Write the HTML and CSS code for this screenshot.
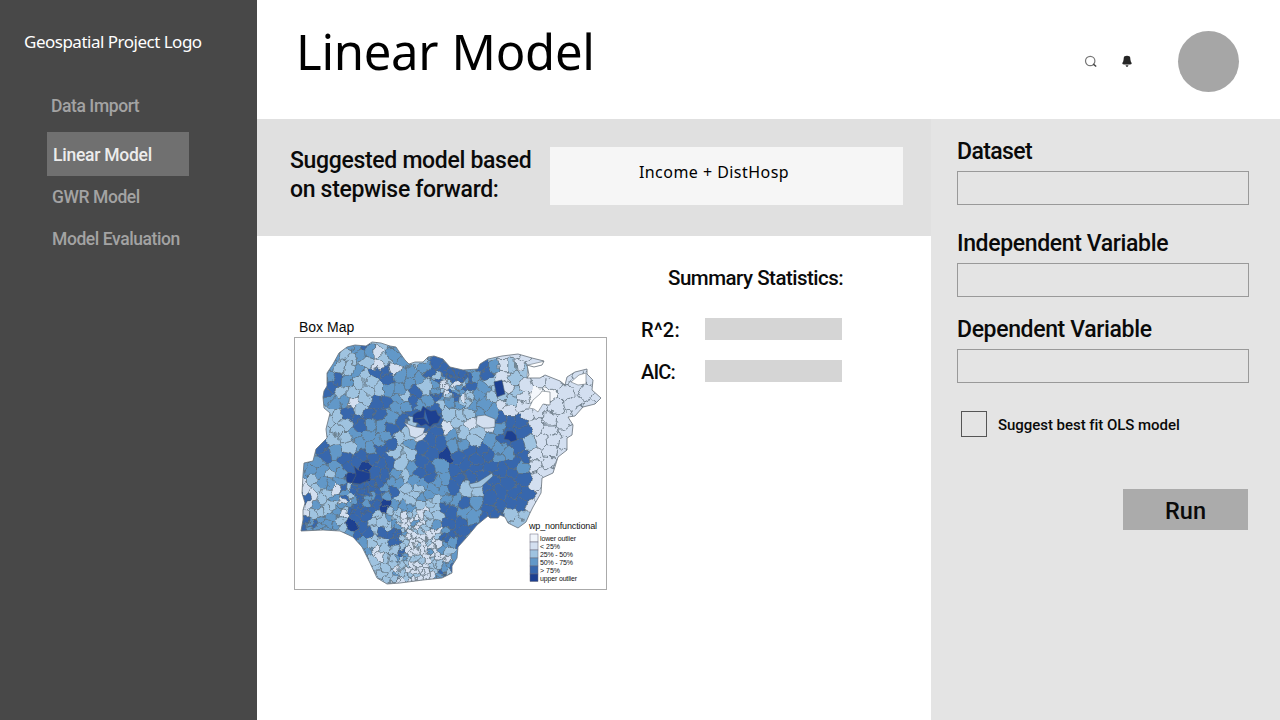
FILE: index.html
```html
<!DOCTYPE html>
<html lang="en">
<head>
<meta charset="utf-8">
<title>Linear Model</title>
<link rel="stylesheet" href="styles.css">
</head>
<body>
<div class="app">
  <aside class="sidebar">
    <div class="logo">Geospatial Project Logo</div>
    <nav class="nav">
      <a class="nav-item import">Data Import</a>
      <a class="nav-item active">Linear Model</a>
      <a class="nav-item gwr">GWR Model</a>
      <a class="nav-item evaluation">Model Evaluation</a>
    </nav>
  </aside>
  <div class="page">
    <header class="header">
      <h1 class="title">Linear Model</h1>
      <div class="tools">
        <svg class="search" viewBox="0 0 14 14" width="14" height="14"><circle cx="6.2" cy="6" r="4.7" fill="none" stroke="#777" stroke-width="1.2"/><path d="M9.3 9.2L12.2 11.5" stroke="#444" stroke-width="1.5"/></svg>
        <svg class="bell" viewBox="0 0 12 14" width="12" height="14"><path d="M3.2 1.4Q6 .2 8.8 1.4Q9.3 2 9.4 4.5Q9.5 6.5 10.8 8.2Q10.5 9.4 8.8 9.6H3.2Q1.5 9.4 1.2 8.2Q2.5 6.5 2.6 4.5Q2.7 2 3.2 1.4Z" fill="#252525"/><path d="M4.5 10H7.5L6.8 12H5.2Z" fill="#666"/></svg>
        <div class="avatar"></div>
      </div>
    </header>
    <div class="body">
      <main class="main">
        <section class="banner">
          <p class="suggested">Suggested model based<br>on stepwise forward:</p>
          <div class="formula">Income + DistHosp</div>
        </section>
        <section class="results">
          <figure class="map">
            <figcaption class="map-title">Box Map</figcaption>
            <div class="map-frame">
              <svg class="map-svg" viewBox="295 338 311 251" width="311" height="251">
                <defs>
                  <clipPath id="land"><path id="land-path"/></clipPath>
                  <filter id="rough" x="0" y="0" width="1" height="1" color-interpolation-filters="sRGB"><feTurbulence type="fractalNoise" baseFrequency="0.12" numOctaves="2" seed="4"/><feDisplacementMap in="SourceGraphic" scale="9" xChannelSelector="R" yChannelSelector="G"/></filter>
                </defs>
                <g clip-path="url(#land)"><g id="cells" filter="url(#rough)"></g>
                  <path class="cell" fill="#1d4091" d="M413 415L417 412L421 411L423 406L427 409L431 411L436 410L438 415L441 417L438 423L433 424L430 427L426 424L421 426L418 423L413 422ZM425 410L424 418L429 424M424 418L415 419"/>
                  <path class="cell" fill="#1d4091" d="M494 382L502 380L505 394L497 397Z"/>
                  <path class="cell" fill="#1d4091" d="M507 431L512 431L516 435L517 440L511 442L509 440L504 439Z"/>
                  <path class="cell" fill="#d3dff0" d="M404 422L410 425L416 427L425 428L423 434L416 438L410 436L409 429Z"/>
                  <path class="cell" fill="#d3dff0" d="M477 416L485 415L495 419L495 427L489 428L483 428L476 424Z"/>
                  <path class="cell" fill="#9fc3e0" d="M469 484L478 482L492 473L493 476L481 487L471 488Z"/>
                  <path class="cell" fill="#1d4091" d="M354 466L358 470L370 473L370 479L360 484L352 483L356 475Z"/>
                  <path class="gap" d="M528 365L545 361L545 374L538 377L527 377Z"/>
                  <path class="gap" d="M533 400L540 394L542 391L550 392L550 405L543 404L538 412L534 409L529 408Z"/>
                  <path class="gap" d="M571 382L579 375L586 373L586 384L578 385Z"/>
                </g>
                <use href="#land-path" class="coast"/>
                <g class="legend">
                  <text x="529" y="529" class="legend-title" textLength="68">wp_nonfunctional</text>
                  <g class="swatches">
                    <rect x="530" y="534" width="8" height="8" fill="#f1f5fb"/><rect x="530" y="542" width="8" height="8" fill="#d3dff0"/><rect x="530" y="550" width="8" height="8" fill="#9fc3e0"/><rect x="530" y="558" width="8" height="8" fill="#6298c8"/><rect x="530" y="566" width="8" height="8" fill="#3767ad"/><rect x="530" y="574" width="8" height="7.5" fill="#1d4091"/>
                  </g>
                  <text x="540" y="540.5" textLength="36">lower outlier</text><text x="540" y="548.5">&lt; 25%</text><text x="540" y="556.5" textLength="33">25% - 50%</text><text x="540" y="564.5" textLength="33">50% - 75%</text><text x="540" y="572.5">&gt; 75%</text><text x="540" y="580.5" textLength="37">upper outlier</text>
                </g>
              </svg>
            </div>
          </figure>
          <div class="stats">
            <h2 class="stats-title">Summary Statistics:</h2>
            <div class="stat"><span class="stat-label">R^2:</span><span class="stat-value"></span></div>
            <div class="stat"><span class="stat-label aic">AIC:</span><span class="stat-value"></span></div>
          </div>
        </section>
      </main>
      <form class="panel">
        <label class="label dataset">Dataset</label><div class="field"></div>
        <label class="label independent">Independent Variable</label><div class="field"></div>
        <label class="label dependent">Dependent Variable</label><div class="field"></div>
        <div class="option"><span class="box"></span><span class="option-text">Suggest best fit OLS model</span></div>
        <button class="run" type="button">Run</button>
      </form>
    </div>
  </div>
</div>
<script src="map.js"></script>
</body>
</html>
```
FILE: styles.css
```css
* { box-sizing: border-box; }
body { margin: 0; font-family: Roboto, "Liberation Sans", sans-serif; font-weight: 500; color: #0a0a0a; background: #fff; }
h1, h2, p, figure { margin: 0; font-weight: inherit; }
.app { display: flex; width: 1280px; height: 720px; overflow: hidden; }
.sidebar { width: 257px; background: #484848; flex: none; padding-top: 30px; }
.logo { height: 24px; padding-left: 24px; font: 400 17px/24px "Noto Sans", sans-serif; letter-spacing: -0.5px; color: #fff; white-space: nowrap; }
.nav { display: flex; flex-direction: column; padding: 31px 0 0 47px; }
.nav-item { height: 42px; line-height: 42px; font-size: 17.5px; letter-spacing: -0.42px; color: #a3a3a3; white-space: nowrap; padding-left: 5px; }
.import { padding-left: 4px; height: 47px; }
.active { height: 44px; line-height: 46px; width: 142px; padding-left: 6px; background: #707070; color: #ececec; letter-spacing: -0.25px; }
.page { flex: 1; display: flex; flex-direction: column; }
.header { height: 119px; display: flex; justify-content: space-between; padding: 0 41px 0 39px; }
.title { font: 400 49px/60px "Noto Sans", sans-serif; padding-top: 21px; letter-spacing: -0.3px; word-spacing: 1px; color: #000; white-space: nowrap; }
.tools { display: flex; align-items: center; height: 122px; }
.search, .bell { margin-top: 2px; }
.bell { margin-left: 23px; }
.avatar { width: 61px; height: 61px; border-radius: 50%; background: #a6a6a6; margin-left: 45px; }
.body { flex: 1; display: flex; }
.main { width: 674px; }
.banner { height: 117px; background: #e0e0e0; display: flex; padding: 27px 0 0 33px; }
.suggested { width: 260px; font-size: 23px; line-height: 29px; letter-spacing: -0.32px; white-space: nowrap; }
.formula { width: 353px; height: 58px; margin-top: 1px; background: #f6f6f6; text-align: center; font: 400 16px/51px "Noto Sans", sans-serif; padding-right: 25px; letter-spacing: .46px; color: #000; }
.results { display: flex; padding-left: 37px; }
.map { width: 313px; padding-top: 81px; }
.map-title { height: 20px; padding-left: 5px; font: 400 14px/20px "Liberation Sans", sans-serif; }
.map-frame { border: 1px solid #aaa; height: 253px; }
.map-svg { display: block; }
.cell { stroke: #53636f; stroke-width: .6; }
.gap { fill: #fff; stroke: #667078; stroke-width: .6; }
.coast { fill: none; stroke: #66707a; stroke-width: .8; }
.legend { font: 400 7px "Liberation Sans", sans-serif; fill: #111; }
.legend-title { font-size: 9px; }
.swatches { stroke: #667; stroke-width: .5; }
.stats { width: 240px; padding: 28px 0 0 34px; }
.stats-title { font-size: 20.5px; line-height: 28px; letter-spacing: -0.5px; padding-left: 27px; margin-bottom: 26px; white-space: nowrap; }
.stat { display: flex; height: 22px; margin-bottom: 20px; }
.stat-label { width: 64px; flex: none; font-size: 20px; line-height: 25px; letter-spacing: .3px; }
.aic { letter-spacing: -0.8px; }
.stat-value { width: 137px; flex: none; background: #d5d5d5; }
.panel { flex: 1; background: #e4e4e4; padding: 19px 0 0 26px; display: flex; flex-direction: column; }
.label { font-size: 23px; line-height: 28px; height: 33px; flex: none; letter-spacing: -0.36px; white-space: nowrap; }
.dataset { letter-spacing: -0.6px; }
.independent { margin-top: 25px; }
.dependent { margin-top: 19px; }
.field { width: 292px; height: 34px; border: 1px solid #999; flex: none; }
.option { display: flex; align-items: center; height: 26px; margin: 28px 0 0 4px; gap: 11px; }
.box { width: 26px; height: 26px; border: 1px solid #555; }
.option-text { font-size: 15px; line-height: 26px; padding-top: 2px; letter-spacing: -0.04px; white-space: nowrap; }
.run { width: 125px; height: 41px; margin: 52px 0 0 166px; padding: 2px 0 0; border: 0; background: #ababab; font: 500 23.5px Roboto, sans-serif; color: #0a0a0a; }
```
FILE: map.js
```js
// District map: a Voronoi mesh clipped to the coastline, shaded by class.
const outline = [[323,397],[324,391],[327,386],[327,373],[333,364],[339,353],[347,347],[355,345],[366,346],[372,342],[381,343],[390,346],[396,347],[400,353],[405,360],[409,364],[415,362],[423,362],[428,357],[434,356],[443,359],[450,367],[463,370],[478,369],[480,364],[488,359],[502,356],[518,354],[532,358],[544,361],[542,365],[534,367],[527,365],[529,375],[527,378],[540,378],[545,375],[560,381],[565,385],[567,377],[575,372],[587,369],[587,374],[593,380],[592,390],[601,398],[595,404],[583,407],[575,416],[568,417],[573,425],[572,435],[567,438],[567,450],[558,457],[553,473],[542,478],[541,493],[533,507],[530,513],[526,522],[518,528],[508,523],[505,517],[500,515],[498,518],[490,518],[488,516],[477,525],[467,537],[458,547],[457,558],[452,566],[452,573],[442,578],[423,580],[400,583],[387,584],[377,578],[370,563],[362,547],[353,537],[340,531],[323,530],[301,531],[303,520],[303,510],[305,503],[302,493],[303,475],[304,463],[313,461],[316,449],[327,438],[326,429],[330,413],[324,408]];
const classes = [
'222233422333333333332211111111','222322312333343322221111111111','333324213132344433431211111111','333243244333434443421221111111','334432222313231231321211113111',
'334322222324242323322210011111','333331244334333423331210111111','332244444344442221334411111111','332223433442421221134441111111','332223323321242322224441111111',
'334323334423444332234442111111','334344444222345434433441111111','333344544423443444344431111111','333235544323443434444444111111','123134543322334422444441111111',
'412335443422323444444441111111','132224445332224343444441111111','122314423221124433442222111111','543325422212134444442222111111','333334424421124443332222111111',
'333333322412112344332222111111','333333312231212333332222111111','333333322121123444332222111111','333333322211123445332222111111','333333322211123455332222111111'];
const fills = ['#f4f7fb', '#d3dff0', '#9fc3e0', '#6298c8', '#3767ad', '#1d4091'];
const dense = [[438,372,470,404],[343,486,374,512],[304,520,322,532],[394,514,428,584],[412,530,450,584]];
let state = 73;
const rand = () => (state = (state * 16807) % 2147483647) / 2147483647;
const inDense = (x, y) => dense.some(d => x > d[0] && x < d[2] && y > d[1] && y < d[3]);
const seeds = [];
for (let k = 0; k < 16000; k++) {
  const x = 296 + rand() * 310, y = 336 + rand() * 254;
  const gap = inDense(x, y) ? 3.8 : x < 445 && y > 480 ? 6.5 : x > 525 ? 10.5 : y > 405 ? 9 : 8;
  if (!seeds.some(s => (s[0]-x)**2 + (s[1]-y)**2 < gap*gap)) seeds.push([x, y]);
}
function clip(poly, a, b) {
  const nx = b[0]-a[0], ny = b[1]-a[1], c = (b[0]**2-a[0]**2+b[1]**2-a[1]**2)/2, out = [];
  poly.forEach((p, i) => {
    const q = poly[(i+1) % poly.length], dp = p[0]*nx+p[1]*ny-c, dq = q[0]*nx+q[1]*ny-c;
    if (dp <= 0) out.push(p);
    if (dp * dq < 0) { const t = dp/(dp-dq); out.push([p[0]+(q[0]-p[0])*t, p[1]+(q[1]-p[1])*t]); }
  });
  return out;
}
const toPath = p => 'M' + p.map(v => v[0].toFixed(1) + ' ' + v[1].toFixed(1)).join('L') + 'Z';
let markup = '';
for (const s of seeds) {
  let poly = [[s[0]-20,s[1]-20],[s[0]+20,s[1]-20],[s[0]+20,s[1]+20],[s[0]-20,s[1]+20]];
  for (const o of seeds) if (o !== s && Math.abs(o[0]-s[0]) < 40 && Math.abs(o[1]-s[1]) < 40) poly = clip(poly, s, o);
  const col = Math.max(0, Math.min(29, Math.floor((s[0]-300)/10))), row = Math.max(0, Math.min(24, Math.floor((s[1]-340)/10)));
  let value = +classes[row][col];
  if (inDense(s[0], s[1])) value = Math.max(1, Math.min(4, value + Math.floor(rand()*3) - 1));
  markup += `<path class="cell" fill="${fills[value]}" d="${toPath(poly)}"/>`;
}
document.getElementById('cells').innerHTML = markup;
document.getElementById('land-path').setAttribute('d', toPath(outline));
```
